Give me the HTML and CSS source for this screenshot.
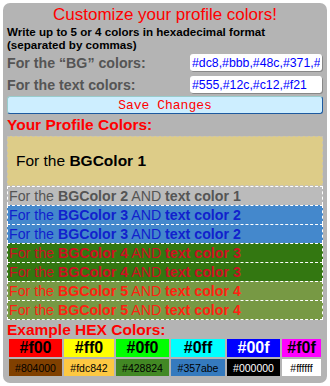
FILE: index.html
```html
<!DOCTYPE html>
<html lang="en">
<head>
    <meta charset="UTF-8">
    <title>Profile colors</title>
    <link rel="stylesheet" href="styles.css">
</head>
<body>
    <div class="panel">
        <h1 class="title">Customize your profile colors!</h1>
        <p class="hint">Write up to 5 or 4 colors in hexadecimal format<br>(separated by commas)</p>

        <div class="field">
            <label>For the “BG” colors:</label>
            <input type="text" value="#dc8,#bbb,#48c,#371,#794">
        </div>
        <div class="field">
            <label>For the text colors:</label>
            <input type="text" value="#555,#12c,#c12,#f21">
        </div>
        <button type="button" class="save">Save Changes</button>

        <h2 class="section">Your Profile Colors:</h2>
        <div class="preview">
            <div class="lead">For the <b>BGColor 1</b></div>
            <div class="row bg2">For the <b>BGColor 2</b> AND <b>text color 1</b></div>
            <div class="row bg3">For the <b>BGColor 3</b> AND <b>text color 2</b></div>
            <div class="row bg3">For the <b>BGColor 3</b> AND <b>text color 2</b></div>
            <div class="row bg4">For the <b>BGColor 4</b> AND <b>text color 3</b></div>
            <div class="row bg4">For the <b>BGColor 4</b> AND <b>text color 3</b></div>
            <div class="row bg5">For the <b>BGColor 5</b> AND <b>text color 4</b></div>
            <div class="row bg5 last">For the <b>BGColor 5</b> AND <b>text color 4</b></div>
        </div>

        <h2 class="section examples">Example HEX Colors:</h2>
        <table class="swatches">
            <tr class="big">
                <td style="background:#f00">#f00</td>
                <td style="background:#ff0">#ff0</td>
                <td style="background:#0f0">#0f0</td>
                <td style="background:#0ff">#0ff</td>
                <td style="background:#00f;color:#fff">#00f</td>
                <td style="background:#f0f">#f0f</td>
            </tr>
            <tr class="small">
                <td style="background:#804000">#804000</td>
                <td style="background:#fdc842">#fdc842</td>
                <td style="background:#428824">#428824</td>
                <td style="background:#357abe">#357abe</td>
                <td style="background:#000000;color:#fff">#000000</td>
                <td style="background:#ffffff">#ffffff</td>
            </tr>
        </table>
    </div>
</body>
</html>
```

FILE: styles.css
```css
body {
    margin: 0;
    background: #fff;
    font-family: "Liberation Sans", Arial, sans-serif;
}
.panel {
    margin: 3px;
    width: 316px;
    height: 376px;
    padding: 2px 4px;
    background: #b4b4b4;
    border-radius: 7px;
    overflow: hidden;
}
.title {
    margin: 0;
    font-size: 17px;
    font-weight: normal;
    color: #f00;
    text-align: center;
    line-height: 20px;
}
.hint {
    margin: 0 0 3px;
    font-size: 11.6px;
    font-weight: bold;
    line-height: 13px;
    color: #000;
}
.field {
    display: flex;
    justify-content: space-between;
    align-items: center;
    height: 17px;
    margin-bottom: 5px;
}
.field + .field {
    margin-bottom: 3px;
}
.field label {
    font-size: 14.2px;
    font-weight: bold;
    color: #555;
}
.field input {
    width: 132px;
    height: 17px;
    box-sizing: border-box;
    margin-right: 1px;
    padding: 0 2px;
    border: none;
    border-radius: 3px;
    box-shadow: 1px 1px 0 #888;
    font-family: "Liberation Sans", Arial, sans-serif;
    font-size: 12.3px;
    color: #00f;
}
.save {
    display: block;
    width: 316px;
    height: 18px;
    padding: 0;
    background: #cdeeff;
    border: 1px solid #9cc;
    border-right-color: #1d5aa0;
    border-bottom-color: #1d5aa0;
    border-radius: 3px;
    font-family: "Liberation Mono", "Courier New", monospace;
    font-size: 13px;
    color: #f00;
}
.section {
    margin: 2px 0 2px;
    font-size: 15.5px;
    font-weight: bold;
    color: #f00;
    line-height: 18px;
}
.section.examples {
    margin: 1px 0 -1px;
    line-height: 17px;
}
.preview {
    font-size: 14.2px;
}
.lead {
    height: 48px;
    line-height: 48px;
    padding-left: 8px;
    background: #dc8;
    border: 1px dashed #c9c3b0;
    font-size: 15.5px;
    color: #000;
}
.row {
    height: 18px;
    line-height: 18px;
    padding-left: 1px;
    border: 1px dashed #fff;
    border-bottom: none;
    white-space: nowrap;
}
.row.last {
    border-bottom: 1px dashed #fff;
}
.bg2 { background: #bbb; color: #555; }
.bg3 { background: #48c; color: #12c; }
.bg4 { background: #371; color: #c12; }
.bg5 { background: #794; color: #f21; }
.swatches {
    width: 316px;
    border-spacing: 2px;
    table-layout: fixed;
}
.swatches td {
    padding: 0;
    text-align: center;
    overflow: hidden;
}
.swatches td:nth-child(1) { width: 53px; }
.swatches td:nth-child(2) { width: 50px; }
.swatches td:nth-child(3) { width: 53px; }
.swatches td:nth-child(4) { width: 54px; }
.swatches td:nth-child(5) { width: 53px; }
.swatches td:nth-child(6) { width: 39px; }
.big td {
    height: 18px;
    font-size: 16px;
    font-weight: bold;
}
.small td {
    height: 17px;
    font-size: 10.5px;
}
```
